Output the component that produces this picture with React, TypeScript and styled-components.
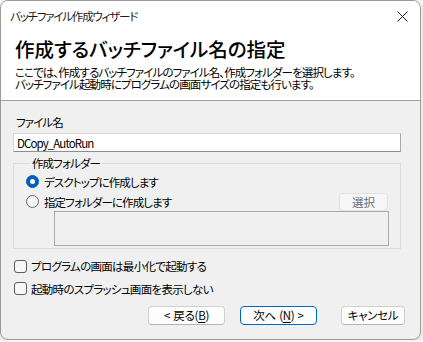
import styled, { createGlobalStyle } from "styled-components";

const GlobalStyle = createGlobalStyle`
  html, body {
    margin: 0;
    padding: 0;
    background: #f7f7f7;
  }
  body {
    font-family: "Noto Sans CJK JP", "Noto Sans", sans-serif;
    font-size: 11.5px;
    letter-spacing: -0.9px;
    color: #000;
    font-feature-settings: "palt";
  }
`;

const Window = styled.div`
  box-sizing: border-box;
  width: 421px;
  height: 340px;
  border: 1px solid #9b9b9b;
  border-radius: 8px;
  background: #f0f0f0;
  overflow: hidden;
  display: flex;
  flex-direction: column;
  box-shadow: 0 2px 6px rgba(0, 0, 0, 0.12);
`;

const TitleBar = styled.div`
  height: 29px;
  display: flex;
  align-items: center;
  justify-content: space-between;
  padding: 0 8px 0 9px;
  background: #fff;
  color: #1b1b1b;
`;

const TitleText = styled.span`
  font-size: 11.5px;
  line-height: 14px;
  padding-top: 1px;
  letter-spacing: -1.2px;
`;

const CloseIcon = styled.svg`
  width: 11px;
  height: 11px;
  margin-right: 4px;
  margin-top: 1px;
`;

const Header = styled.div`
  box-sizing: border-box;
  height: 71px;
  background: #fff;
  border-bottom: 1px solid #a0a0a0;
  padding: 7px 14px 0;
`;

const Heading = styled.h1`
  margin: 0 0 5px;
  font-size: 19.5px;
  font-weight: 500;
  line-height: 24px;
  letter-spacing: 0;
`;

const Description = styled.p`
  margin: 0;
  line-height: 12px;
`;

const Body = styled.div`
  flex: 1;
  display: flex;
  flex-direction: column;
  padding: 14px 19px 0 12px;
`;

const FieldLabel = styled.div`
  line-height: 14px;
  padding-left: 3px;
  margin-bottom: 4px;
`;

const TextInput = styled.input`
  box-sizing: border-box;
  height: 19px;
  margin: 0;
  padding: 0 3px;
  border: 1px solid #d9d9d9;
  border-right-color: #a8a8a8;
  border-bottom-color: #8e8e8e;
  background: #fff;
  font: inherit;
  letter-spacing: -0.9px;
  color: #000;
  outline: none;
`;

const Group = styled.fieldset`
  margin: 4px 0 0;
  padding: 1px 11px 2px 12px;
  border: 1px solid #dcdcdc;
  min-width: 0;
`;

const Legend = styled.legend`
  padding: 0 2px;
  margin-left: 4px;
  line-height: 14px;
`;

const OptionRow = styled.label<{ $h: number }>`
  display: flex;
  align-items: center;
  height: ${(p) => p.$h}px;
  gap: 5px;
`;

const Radio = styled.span<{ $checked?: boolean }>`
  box-sizing: border-box;
  width: 13px;
  height: 13px;
  border-radius: 50%;
  flex: none;
  display: flex;
  align-items: center;
  justify-content: center;
  background: ${(p) => (p.$checked ? "#005fb8" : "#f5f5f5")};
  border: 1px solid ${(p) => (p.$checked ? "#005fb8" : "#6b6b6b")};

  &::after {
    content: "";
    display: ${(p) => (p.$checked ? "block" : "none")};
    width: 5px;
    height: 5px;
    border-radius: 50%;
    background: #fff;
  }
`;

const Spacer = styled.span`
  flex: 1;
`;

const SmallButton = styled.button`
  box-sizing: border-box;
  width: 49px;
  height: 18px;
  margin: 0 1px 0 0;
  padding: 0;
  border: 1px solid #e2e2e2;
  border-radius: 3px;
  background: #f6f6f6;
  font: inherit;
  letter-spacing: 0;
  color: #6d6d6d;
`;

const PathBox = styled.div`
  box-sizing: border-box;
  height: 35px;
  margin-left: 28px;
  border: 1px solid #a9a9a9;
  background: #f0f0f0;
`;

const CheckList = styled.div`
  margin-top: 6px;
  display: flex;
  flex-direction: column;
`;

const CheckBox = styled.span`
  box-sizing: border-box;
  width: 13px;
  height: 13px;
  flex: none;
  border: 1px solid #5e5e5e;
  border-radius: 3px;
  background: #f7f7f7;
`;

const CheckRow = styled.label`
  display: flex;
  align-items: center;
  height: 22.5px;
  gap: 4px;
  padding-left: 1px;
  letter-spacing: -0.7px;
`;

const ButtonRow = styled.div`
  display: flex;
  justify-content: flex-end;
  margin: 6px -4px 0 0;
  gap: 15px;
`;

const DialogButton = styled.button<{ $w: number; $default?: boolean; $gap?: number }>`
  box-sizing: border-box;
  width: ${(p) => p.$w}px;
  height: 19px;
  margin: 0 0 0 ${(p) => p.$gap || 0}px;
  padding: 0;
  border: 1px solid ${(p) => (p.$default ? "#0067c0" : "#d0d0d0")};
  border-bottom-color: ${(p) => (p.$default ? "#0067c0" : "#b5b5b5")};
  border-radius: 4px;
  background: #fdfdfd;
  font: inherit;
  letter-spacing: -0.3px;
  word-spacing: 1px;
  line-height: 17px;
  color: #000;

  u {
    text-decoration: underline;
    text-underline-offset: 2px;
  }
`;

export default function App() {
  return (
    <>
      <GlobalStyle />
      <Window>
        <TitleBar>
          <TitleText>バッチファイル作成ウィザード</TitleText>
          <CloseIcon viewBox="0 0 11 11">
            <path d="M0.5 0.5 L10.5 10.5 M10.5 0.5 L0.5 10.5" stroke="#1b1b1b" strokeWidth="1" fill="none" />
          </CloseIcon>
        </TitleBar>
        <Header>
          <Heading>作成するバッチファイル名の指定</Heading>
          <Description>ここでは、作成するバッチファイルのファイル名、作成フォルダーを選択します。</Description>
          <Description>バッチファイル起動時にプログラムの画面サイズの指定も行います。</Description>
        </Header>
        <Body>
          <FieldLabel>ファイル名</FieldLabel>
          <TextInput defaultValue="DCopy_AutoRun" />
          <Group>
            <Legend>作成フォルダー</Legend>
            <OptionRow $h={21}>
              <Radio $checked />
              デスクトップに作成します
            </OptionRow>
            <OptionRow $h={19}>
              <Radio />
              指定フォルダーに作成します
              <Spacer />
              <SmallButton disabled>選択</SmallButton>
            </OptionRow>
            <PathBox />
          </Group>
          <CheckList>
            <CheckRow>
              <CheckBox />
              プログラムの画面は最小化で起動する
            </CheckRow>
            <CheckRow>
              <CheckBox />
              起動時のスプラッシュ画面を表示しない
            </CheckRow>
          </CheckList>
          <ButtonRow>
            <DialogButton $w={77}>
              &lt; 戻る(<u>B</u>)
            </DialogButton>
            <DialogButton $w={77} $default>
              次へ (<u>N</u>) &gt;
            </DialogButton>
            <DialogButton $w={64} $gap={9}>
              キャンセル
            </DialogButton>
          </ButtonRow>
        </Body>
      </Window>
    </>
  );
}
